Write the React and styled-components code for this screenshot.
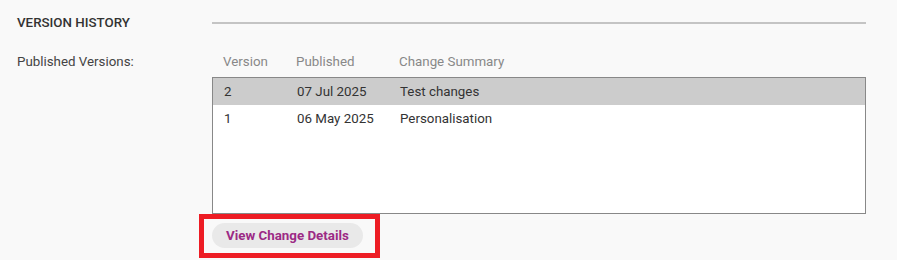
import React from 'react';
import styled, { createGlobalStyle } from 'styled-components';

const GlobalStyle = createGlobalStyle`
body {
  margin: 0;
  background: #f9f9f9;
  font-family: Roboto, "Liberation Sans", Arial, sans-serif;
}
`;

const Page = styled.div`
display: grid;
grid-template-columns: 195px 654px;
padding: 13px 0 0 17px;
`;

const Heading = styled.div`
font-size: 13.33px;
font-weight: 500;
line-height: 20px;
color: #333;
`;

const Rule = styled.div`
height: 2px;
background: #c4c4c4;
margin-top: 9px;
`;

const Label = styled.div`
margin-top: 19px;
font-size: 13.33px;
line-height: 20px;
color: #444;
`;

const Section = styled.div`
margin-top: 19px;
`;

const Columns = styled.div`
display: grid;
grid-template-columns: 73px 103px 1fr;
padding-left: ${p => p.$inset}px;
font-size: 13.33px;
line-height: ${p => p.$height}px;
color: ${p => p.$color};
background: ${p => p.$bg || 'transparent'};
`;

const Table = styled.div`
margin-top: 5px;
height: 135px;
border: 1px solid #888;
background: #fff;
`;

const Highlight = styled.div`
display: inline-block;
margin: 0 0 0 -13px;
padding: 4px 12px 5px 8px;
border: 5px solid #ed1c24;
`;

const Button = styled.button`
display: block;
height: 25px;
padding: 0 14px;
border: none;
border-radius: 13px;
background: #e9e9e9;
color: #9c2a85;
font-family: Roboto, "Liberation Sans", Arial, sans-serif;
font-size: 13.33px;
font-weight: 700;
cursor: pointer;
`;

const versions = [
  { v: '2', date: '07 Jul 2025', summary: 'Test changes', selected: true },
  { v: '1', date: '06 May 2025', summary: 'Personalisation' },
];

const App = () => {
  return (
    <>
      <GlobalStyle />
      <Page>
        <Heading>VERSION HISTORY</Heading>
        <Rule />
        <Label>Published Versions:</Label>
        <Section>
          <Columns $inset={11} $height={20} $color="#888">
            <span>Version</span>
            <span>Published</span>
            <span>Change Summary</span>
          </Columns>
          <Table>
            {versions.map(row => (
              <Columns key={row.v} $inset={11} $height={27} $color="#333" $bg={row.selected ? '#cccccc' : '#fff'}>
                <span>{row.v}</span>
                <span>{row.date}</span>
                <span>{row.summary}</span>
              </Columns>
            ))}
          </Table>
          <Highlight>
            <Button>View Change Details</Button>
          </Highlight>
        </Section>
      </Page>
    </>
  );
}

export default App;
